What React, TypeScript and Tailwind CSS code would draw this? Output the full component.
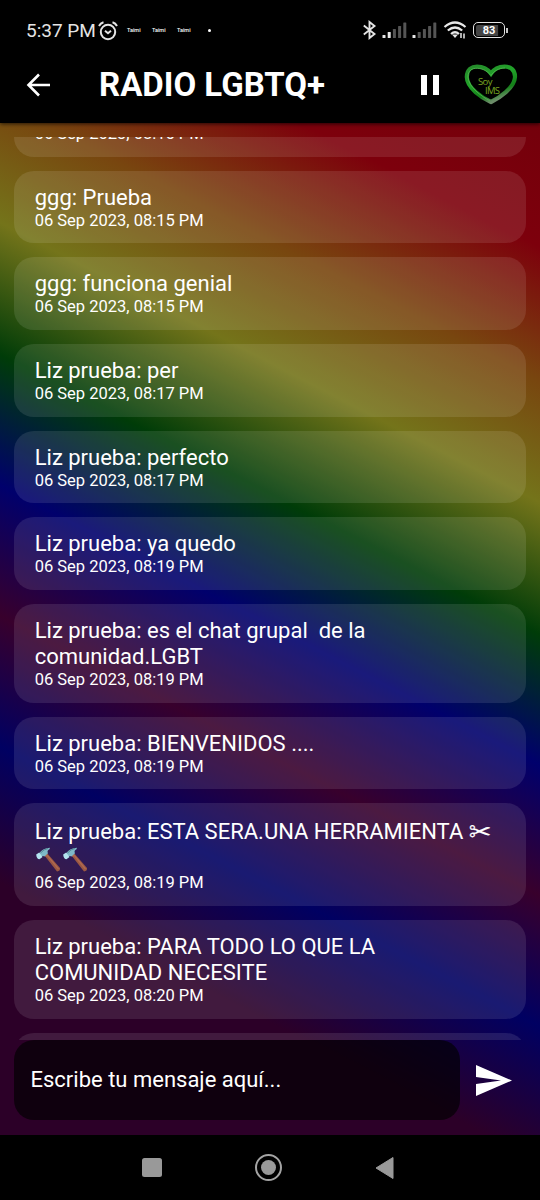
import React from "react";

type Message = { author: string; lines: React.ReactNode[]; date: string };

function Hammer() {
  return (
    <svg className="mr-[1px] inline-block h-[26px] w-[26px] align-top" viewBox="0 0 26 26">
      <path d="M9.5 8.5 L12.3 6.5 L25 21 Q25.5 24 22 24.5 Z" fill="#9a5843" />
      <path d="M10.5 9.5 L12 8.2 L23.5 22" fill="none" stroke="#b06a50" strokeWidth="1.2" />
      <path d="M4 6.500 Q8 1 15 .8 L14.5 2.2 Q11.500 3.500 13 6.300 L9.500 9.500 Q7.500 8.500 6 10 Z" fill="#7fb9c8" />
      <path d="M1.200 7.500 L4.200 5.500 L7.500 10 L4.500 12.300 Q1.500 12 1.200 7.500Z" fill="#b4e4f0" />
      <path d="M5.500 6 Q9 2 13 1.500" fill="none" stroke="#4d7f8c" strokeWidth=".8" />
    </svg>
  );
}

const messages: Message[] = [
  { author: "ggg", lines: ["Prueba"], date: "06 Sep 2023, 08:15 PM" },
  { author: "ggg", lines: ["funciona genial"], date: "06 Sep 2023, 08:15 PM" },
  { author: "Liz prueba", lines: ["per"], date: "06 Sep 2023, 08:17 PM" },
  { author: "Liz prueba", lines: ["perfecto"], date: "06 Sep 2023, 08:17 PM" },
  { author: "Liz prueba", lines: ["ya quedo"], date: "06 Sep 2023, 08:19 PM" },
  { author: "Liz prueba", lines: ["es el chat grupal  de la", "comunidad.LGBT"], date: "06 Sep 2023, 08:19 PM" },
  { author: "Liz prueba", lines: ["BIENVENIDOS ...."], date: "06 Sep 2023, 08:19 PM" },
  {
    author: "Liz prueba",
    lines: [
      <React.Fragment key="a">
        ESTA SERA.UNA HERRAMIENTA{" "}
        <span className="relative top-[2px] font-['DejaVu_Sans'] text-[27px] leading-[0] [-webkit-text-stroke:0.2px_white]">✂</span>
      </React.Fragment>,
      <span key="b" className="block pt-[2px]">
        <Hammer />
        <Hammer />
      </span>,
    ],
    date: "06 Sep 2023, 08:19 PM",
  },
  { author: "Liz prueba", lines: ["PARA TODO LO QUE LA", "COMUNIDAD NECESITE"], date: "06 Sep 2023, 08:20 PM" },
];

function MessageCard({ message }: { message: Message }) {
  const hasIcons = typeof message.lines[0] !== "string";
  return (
    <article
      className={`shrink-0 rounded-[20px] bg-white/10 pl-[20.700px] text-white ${
        hasIcons ? "h-[103.200px] pt-[16.200px]" : message.lines.length > 1 ? "h-[98.600px] pt-[13.900px]" : "h-[72.700px] pt-[14.200px]"
      }`}
    >
      <div className="text-[22px] leading-[26px] whitespace-pre">
        {message.lines.map((line, i) => (
          <div key={i} className="h-[26px]">
            {i === 0 && `${message.author}: `}
            {line}
          </div>
        ))}
      </div>
      <div className={`text-[16.500px] leading-[19px] ${hasIcons ? "pt-[1.800px]" : ""}`}>{message.date}</div>
    </article>
  );
}

function Signal({ on }: { on: number }) {
  return (
    <svg className="h-[16px] w-[25px]" viewBox="0 0 25 16">
      {[3, 6, 9, 12, 15.5].map((h, i) => (
        <rect key={i} x={0.5 + i * 5.2} y={16 - h} width="3" height={h} rx=".6" fill={i < on ? "#e8e8e8" : "#555"} />
      ))}
    </svg>
  );
}

function StatusBar() {
  return (
    <div className="flex h-[46px] items-center pt-[15px] pl-[26px] text-[#e4e4e4]">
      <span className="w-[72px] text-[19px] leading-[22px] whitespace-nowrap">5:37 PM</span>
      <svg className="h-[20px] w-[20px]" viewBox="0 0 20 20" fill="none" stroke="#e4e4e4">
        <circle cx="10" cy="11" r="7.200" strokeWidth="2" />
        <path d="M1 5 Q2.500 2 5.500 1.200 M19 5 Q17.500 2 14.500 1.200" strokeWidth="2" />
        <path d="M7 9.800 L10 12.300 L13 9.800" strokeWidth="2" />
      </svg>
      <div className="ml-[9px] flex w-[75px] pb-[1px] text-[5.500px] leading-[8px] font-medium text-white">
        <span className="w-[25px]">Taimi</span>
        <span className="w-[25px]">Taimi</span>
        <span className="w-[25px]">Taimi</span>
      </div>
      <span className="mb-[1px] ml-[5.500px] h-[3px] w-[3px] rounded-full bg-white" />
      <svg className="mb-[1px] ml-[151.500px] h-[20px] w-[15px]" viewBox="0 0 15 20" fill="none" stroke="#e4e4e4" strokeWidth="1.900">
        <path d="M1.800 5.500 L12.500 14 L7.500 18 V2 L12.500 6 L1.800 14.500" />
      </svg>
      <span className="ml-[5px] flex pb-[1px]"><Signal on={2} /></span>
      <span className="ml-[5px] flex pb-[1px]"><Signal on={1} /></span>
      <svg className="mb-[1px] ml-[5.500px] h-[18px] w-[24px]" viewBox="0 0 24 18" fill="none" stroke="#e8e8e8" strokeWidth="2.200">
        <path d="M1.500 6 Q12 -3 22.500 6" />
        <path d="M4.800 9.500 Q12 3.500 19.200 9.500" />
        <path d="M8 13 Q12 9.500 16 13" />
        <path d="M9 13.500 H15 L12 17 Z" fill="#e8e8e8" stroke="none" />
        <path d="M18 12 V17 M21 12.500 V17.500" strokeWidth="1.500" />
      </svg>
      <div className="ml-[6.500px] flex items-center pb-[1px]">
        <div className="flex h-[16px] w-[32px] items-center justify-center rounded-[5px] border-[1.500px] border-[#e4e4e4] p-[1.500px]">
          <div className="flex h-full w-full items-center justify-center rounded-[2px] bg-gradient-to-r from-[#444] from-80% to-black to-85% text-[11px] leading-none font-bold text-white">
            83
          </div>
        </div>
        <span className="ml-[1px] h-[5px] w-[2px] bg-[#c4c4c4]" />
      </div>
    </div>
  );
}

function HeartLogo() {
  return (
    <svg className="h-[41px] w-[54px]" viewBox="0 0 54 41">
      <defs>
        <linearGradient id="heart" x1="0" y1="0" x2=".5" y2="1">
          <stop offset="0" stopColor="#258a2b" />
          <stop offset=".45" stopColor="#21a329" />
          <stop offset=".8" stopColor="#148019" />
          <stop offset="1" stopColor="#6b8b68" />
        </linearGradient>
      </defs>
      <path
        d="M27 38 C18 34 3 24 2.800 13 C2.800 5 8 2.500 13 2.500 C20 2.500 24.500 6 27 9.500 C30 5 35 2.500 40.500 2.500 C46.500 2.500 51.200 6 51 13 C50.500 24 35 34 27 38Z"
        fill="none"
        stroke="url(#heart)"
        strokeWidth="4.200"
      />
      <path
        d="M26 37 C17 32 4.500 23 4 13 C4 6.500 8 4 13.500 4.300 C20 4.700 24 8 27 11.500 C30 7 35 4 41 4"
        fill="none"
        stroke="#55b453"
        strokeWidth=".8"
      />
      <text x="14" y="20.500" fill="#7aa822" fontFamily="Open Sans" fontSize="9.500" textLength="14.500">Soy</text>
      <text x="21" y="29.500" fill="#7aa822" fontFamily="Open Sans" fontSize="9.500" textLength="15">IMS</text>
    </svg>
  );
}

function Header() {
  return (
    <header className="relative z-10 h-[123px] bg-black shadow-[0_1px_4px_rgba(0,0,0,0.7)]">
      <StatusBar />
      <div className="flex h-[77px] items-center pl-[26px]">
        <svg className="h-[24px] w-[25px]" viewBox="0 0 25 24" fill="none" stroke="#fff" strokeWidth="2.600">
          <path d="M24 12 H3 M13 1.500 L2.500 12 L13 22.500" />
        </svg>
        <h1 className="ml-[48px] w-[322px]">
          <svg className="block h-[40px] w-[230px] overflow-visible" viewBox="0 0 230 40">
            <text x="0" y="31" fill="#fff" fontFamily="Roboto" fontWeight="700" fontSize="34" textLength="226" lengthAdjust="spacingAndGlyphs">RADIO LGBTQ+</text>
          </svg>
        </h1>
        <div className="flex w-[18px] justify-between">
          <span className="h-[20px] w-[6px] bg-white" />
          <span className="h-[20px] w-[6px] bg-white" />
        </div>
        <span className="ml-[25px] flex"><HeartLogo /></span>
      </div>
    </header>
  );
}

export default function App() {
  return (
    <div className="flex h-[1200px] w-[540px] flex-col overflow-hidden bg-black font-['Roboto',sans-serif]">
      <Header />
      <main className="flex h-[1012px] flex-col bg-[linear-gradient(207.400deg,#74000b_0px,#7d000c_110px,#78460f_230px,#74741a_337px,#003c08_454px,#00006c_570px,#38002c_686px,#000062_802px,#2c0028_923px,#2c0028_1146px)] px-[14px] pt-[14px]">
        <section className="flex h-[903px] flex-col gap-[14px] overflow-hidden">
          <div className="h-[19.500px] shrink-0 overflow-hidden rounded-b-[20px] bg-white/10 pl-[20.700px] text-[16.500px] leading-[19px] text-white">
            <div className="-mt-[13.200px]">06 Sep 2023, 08:15 PM</div>
          </div>
          {messages.map((m, i) => (
            <MessageCard key={i} message={m} />
          ))}
          <div className="h-[72.700px] shrink-0 rounded-[20px] bg-white/10" />
        </section>
        <form className="flex h-[80px] items-center">
          <div className="flex h-[80px] w-[446px] items-center rounded-[20px] bg-black/65 pb-[1px] pl-[16.500px] text-[22px] text-white">
            Escribe tu mensaje aquí...
          </div>
          <svg className="ml-[16px] h-[31px] w-[36px]" viewBox="0 0 36 31">
            <path d="M0 0 L36 15.500 L0 31 V19 L25 15.500 L0 12Z" fill="#fff" />
          </svg>
        </form>
      </main>
      <nav className="flex h-[65px] items-center pl-[142px]">
        <span className="h-[19.500px] w-[19.500px] rounded-[2.500px] bg-[#999]" />
        <span className="ml-[93px] flex h-[27px] w-[27px] items-center justify-center rounded-full border-2 border-[#a4a4a4]">
          <span className="h-[15px] w-[15px] rounded-full bg-[#999]" />
        </span>
        <svg className="ml-[93px] h-[24px] w-[19px]" viewBox="0 0 19 24">
          <path d="M1 12 L18 1.500 V22.500Z" fill="#999" stroke="#999" strokeLinejoin="round" />
        </svg>
      </nav>
    </div>
  );
}
